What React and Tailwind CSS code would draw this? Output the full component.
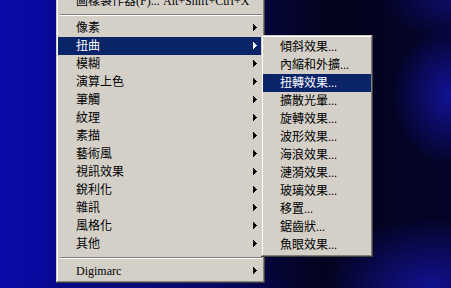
import React from "react";

const FONT = { fontFamily: '"Liberation Serif", "Noto Sans CJK TC", serif' };

function Arrow({ white }) {
  const c = white ? "#ffffff" : "#000000";
  return (
    <svg width="4" height="7" viewBox="0 0 4 7" shapeRendering="crispEdges" className="absolute right-[6px] top-[5px]">
      <rect x="0" y="0" width="1" height="7" fill={c} />
      <rect x="1" y="1" width="1" height="5" fill={c} />
      <rect x="2" y="2" width="1" height="3" fill={c} />
      <rect x="3" y="3" width="1" height="1" fill={c} />
    </svg>
  );
}

function Item({ label, arrow, active, pl = "pl-[18px]", accel }) {
  return (
    <div
      className={`relative flex h-[18px] items-center ${pl} text-[12px] leading-[18px] whitespace-nowrap ${
        active ? "bg-[#0a246a] text-white" : "text-black"
      }`}
    >
      {accel ? (
        <>
          <span className="w-[87px] shrink-0">{label}</span>
          <span>{accel}</span>
        </>
      ) : (
        <span>{label}</span>
      )}
      {arrow && <Arrow white={active} />}
    </div>
  );
}

function Sep() {
  return (
    <div className="h-[9px] pt-[4px] pl-[2px] pr-[1px]">
      <div className="border-t border-t-[#808080] border-b border-b-white" />
    </div>
  );
}

const border =
  "shadow-[inset_-1px_-1px_#404040,inset_1px_1px_#d4d0c8,inset_-2px_-2px_#808080,inset_2px_2px_#ffffff]";

export default function App() {
  const main = [
    "像素",
    "扭曲",
    "模糊",
    "演算上色",
    "筆觸",
    "紋理",
    "素描",
    "藝術風",
    "視訊效果",
    "銳利化",
    "雜訊",
    "風格化",
    "其他",
  ];
  const sub = [
    "傾斜效果...",
    "內縮和外擴...",
    "扭轉效果...",
    "擴散光暈...",
    "旋轉效果...",
    "波形效果...",
    "海浪效果...",
    "漣漪效果...",
    "玻璃效果...",
    "移置...",
    "鋸齒狀...",
    "魚眼效果...",
  ];
  return (
    <div
      style={FONT}
      className="relative w-[451px] h-[288px] overflow-hidden bg-[#03031c] bg-[radial-gradient(ellipse_60px_70px_at_451px_95px,rgba(20,20,170,0.85)_0%,rgba(8,8,100,0)_100%),radial-gradient(ellipse_70px_40px_at_451px_0px,rgba(16,16,130,0.7)_0%,rgba(8,8,100,0)_100%),radial-gradient(ellipse_110px_70px_at_430px_288px,rgba(20,20,170,0.8)_0%,rgba(8,8,100,0)_100%),radial-gradient(ellipse_160px_40px_at_150px_300px,rgba(12,12,130,0.9)_0%,rgba(8,8,100,0)_100%),linear-gradient(90deg,#0b0ba8_0px,#0909a0_40px,#07078c_56px,#05053a_265px,#03031c_330px,#04042a_451px)]"
    >
      {/* Main menu */}
      <div className={`absolute left-[56px] top-[-11px] w-[209px] bg-[#d4d0c8] p-[2px] ${border}`}>
        <div className="py-px">
          <Item label="圖樣製作器(F)..." accel="Alt+Shift+Ctrl+X" />
          <Sep />
          {main.map((m) => (
            <Item key={m} label={m} arrow active={m === "扭曲"} />
          ))}
          <Sep />
          <Item label="Digimarc" arrow />
        </div>
      </div>

      {/* Submenu */}
      <div className={`absolute left-[261px] top-[35px] w-[112px] bg-[#d4d0c8] p-[2px] ${border}`}>
        <div className="py-px">
          {sub.map((s) => (
            <Item key={s} label={s} pl="pl-[17px]" active={s === "扭轉效果..."} />
          ))}
        </div>
      </div>
    </div>
  );
}
